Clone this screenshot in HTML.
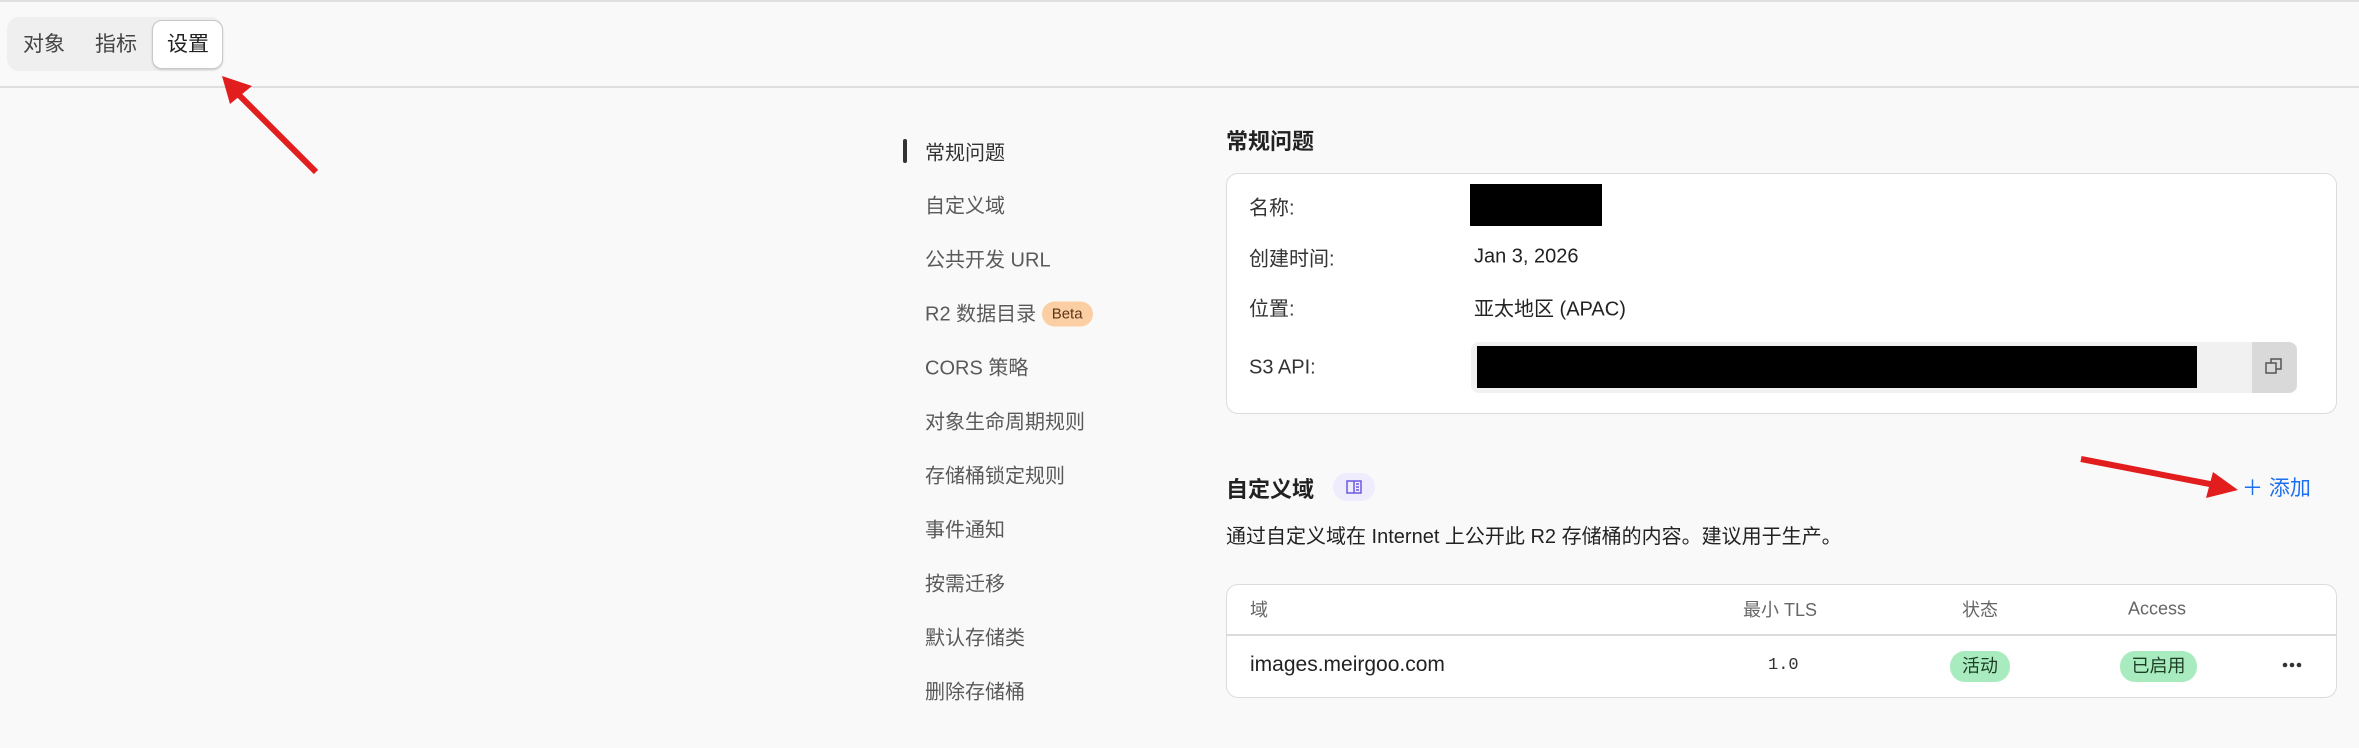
<!DOCTYPE html>
<html><head><meta charset="utf-8"><style>
*{margin:0;padding:0;box-sizing:border-box}
body{width:2359px;height:748px;background:#f9f9f9;font-family:"Liberation Sans","Noto Sans CJK SC",sans-serif;position:relative;overflow:hidden;color:#222}
.a{position:absolute;white-space:nowrap}
.nav{position:absolute;left:925px;font-size:20px;color:#5a5a5a;transform:translateY(-50%)}
.lbl{position:absolute;left:1249px;font-size:20px;color:#333;transform:translateY(-50%)}
.val{position:absolute;left:1474px;font-size:20px;color:#222;transform:translateY(-50%)}
.th{position:absolute;top:609px;font-size:18px;color:#666;transform:translate(-50%,-50%)}
</style></head><body>
<div class="a" style="left:0;top:0;width:2359px;height:2px;background:#e0e0e0"></div>
<div class="a" style="left:7px;top:17px;width:216px;height:54px;background:#efefef;border-radius:12px"></div>
<div class="a" style="left:152px;top:20px;width:71px;height:49px;background:#fff;border:1px solid #c8c8c8;border-radius:10px;box-shadow:0 1px 2px rgba(0,0,0,.15)"></div>
<div class="a" style="left:23px;top:28px;font-size:21px;color:#444">对象</div>
<div class="a" style="left:95px;top:28px;font-size:21px;color:#444">指标</div>
<div class="a" style="left:167px;top:28px;font-size:21px;color:#222">设置</div>
<div class="a" style="left:0;top:86px;width:2359px;height:2px;background:#dedede"></div>

<div class="a" style="left:903px;top:139px;width:4px;height:24px;background:#333;border-radius:2px"></div>
<div class="nav" style="top:151px;color:#333">常规问题</div>
<div class="nav" style="top:204px">自定义域</div>
<div class="nav" style="top:258px">公共开发 URL</div>
<div class="nav" style="top:312px">R2 数据目录 <span style="display:inline-block;background:#fbcfa3;color:#5b3515;font-size:15px;padding:4px 10px;border-radius:14px;vertical-align:2px">Beta</span></div>
<div class="nav" style="top:366px">CORS 策略</div>
<div class="nav" style="top:420px">对象生命周期规则</div>
<div class="nav" style="top:474px">存储桶锁定规则</div>
<div class="nav" style="top:528px">事件通知</div>
<div class="nav" style="top:582px">按需迁移</div>
<div class="nav" style="top:636px">默认存储类</div>
<div class="nav" style="top:690px">删除存储桶</div>

<div class="a" style="left:1226px;top:124px;font-size:22px;font-weight:bold;color:#222">常规问题</div>
<div class="a" style="left:1226px;top:173px;width:1111px;height:241px;background:#fff;border:1.5px solid #dcdcdc;border-radius:12px"></div>
<div class="lbl" style="top:206px">名称:</div>
<div class="a" style="left:1470px;top:184px;width:132px;height:42px;background:#000"></div>
<div class="lbl" style="top:257px">创建时间:</div><div class="val" style="top:257px">Jan 3, 2026</div>
<div class="lbl" style="top:307px">位置:</div><div class="val" style="top:307px">亚太地区 (APAC)</div>
<div class="lbl" style="top:368px">S3 API:</div>
<div class="a" style="left:1471px;top:342px;width:826px;height:51px;background:#f1f1f1;border-radius:8px"></div>
<div class="a" style="left:1477px;top:346px;width:720px;height:42px;background:#000"></div>
<div class="a" style="left:2252px;top:342px;width:45px;height:51px;background:#d9d9d9;border-radius:0 8px 8px 0"></div>
<svg class="a" style="left:2264px;top:356px" width="20" height="20" viewBox="0 0 20 20" fill="none" stroke="#555" stroke-width="1.5"><rect x="2" y="7" width="10" height="10"/><path d="M7 7V3h10v10h-5"/></svg>

<div class="a" style="left:1226px;top:472px;font-size:22px;font-weight:bold;color:#222">自定义域</div>
<div class="a" style="left:1333px;top:473px;width:42px;height:28px;background:#eeecfd;border-radius:14px"></div>
<svg class="a" style="left:1346px;top:480px" width="16" height="14" viewBox="0 0 16 14" fill="none" stroke="#6a5ae0" stroke-width="1.5"><rect x="1" y="1" width="14" height="12"/><path d="M8 1v12M10 4h3M10 7h3M10 10h3"/></svg>
<div class="a" style="left:2242px;top:472px;font-size:21px;color:#1b6ff0">＋ 添加</div>
<div class="a" style="left:1226px;top:520px;font-size:20px;color:#222">通过自定义域在 Internet 上公开此 R2 存储桶的内容。建议用于生产。</div>

<div class="a" style="left:1226px;top:584px;width:1111px;height:114px;background:#fff;border:1.5px solid #dcdcdc;border-radius:12px"></div>
<div class="a" style="left:1227px;top:634px;width:1109px;height:1.5px;background:#dcdcdc"></div>
<div class="th" style="left:1259px">域</div>
<div class="th" style="left:1780px">最小 TLS</div>
<div class="th" style="left:1980px">状态</div>
<div class="th" style="left:2157px">Access</div>
<div class="a" style="left:1250px;top:653px;font-size:21px;color:#222">images.meirgoo.com</div>
<div class="a" style="left:1768px;top:656px;font-size:17px;color:#333;font-family:'Liberation Mono',monospace">1.0</div>
<div class="a" style="left:1950px;top:651px;width:60px;height:31px;background:#a8ebbe;border-radius:15px;font-size:18px;color:#1d3d28;text-align:center;line-height:31px">活动</div>
<div class="a" style="left:2120px;top:651px;width:77px;height:31px;background:#a8ebbe;border-radius:15px;font-size:18px;color:#1d3d28;text-align:center;line-height:31px">已启用</div>
<svg class="a" style="left:2282px;top:661px" width="20" height="8"><circle cx="3" cy="4" r="2.3" fill="#333"/><circle cx="10" cy="4" r="2.3" fill="#333"/><circle cx="17" cy="4" r="2.3" fill="#333"/></svg>

<svg class="a" style="left:0;top:0" width="2359" height="748">
<line x1="316" y1="172" x2="236" y2="92" stroke="#e21d1d" stroke-width="6"/>
<polygon points="222,76 252,86 230,104" fill="#e21d1d"/>
<line x1="2081" y1="459" x2="2215" y2="485" stroke="#e21d1d" stroke-width="6"/>
<polygon points="2238,490 2206,498 2213,472" fill="#e21d1d"/>
</svg>
</body></html>
